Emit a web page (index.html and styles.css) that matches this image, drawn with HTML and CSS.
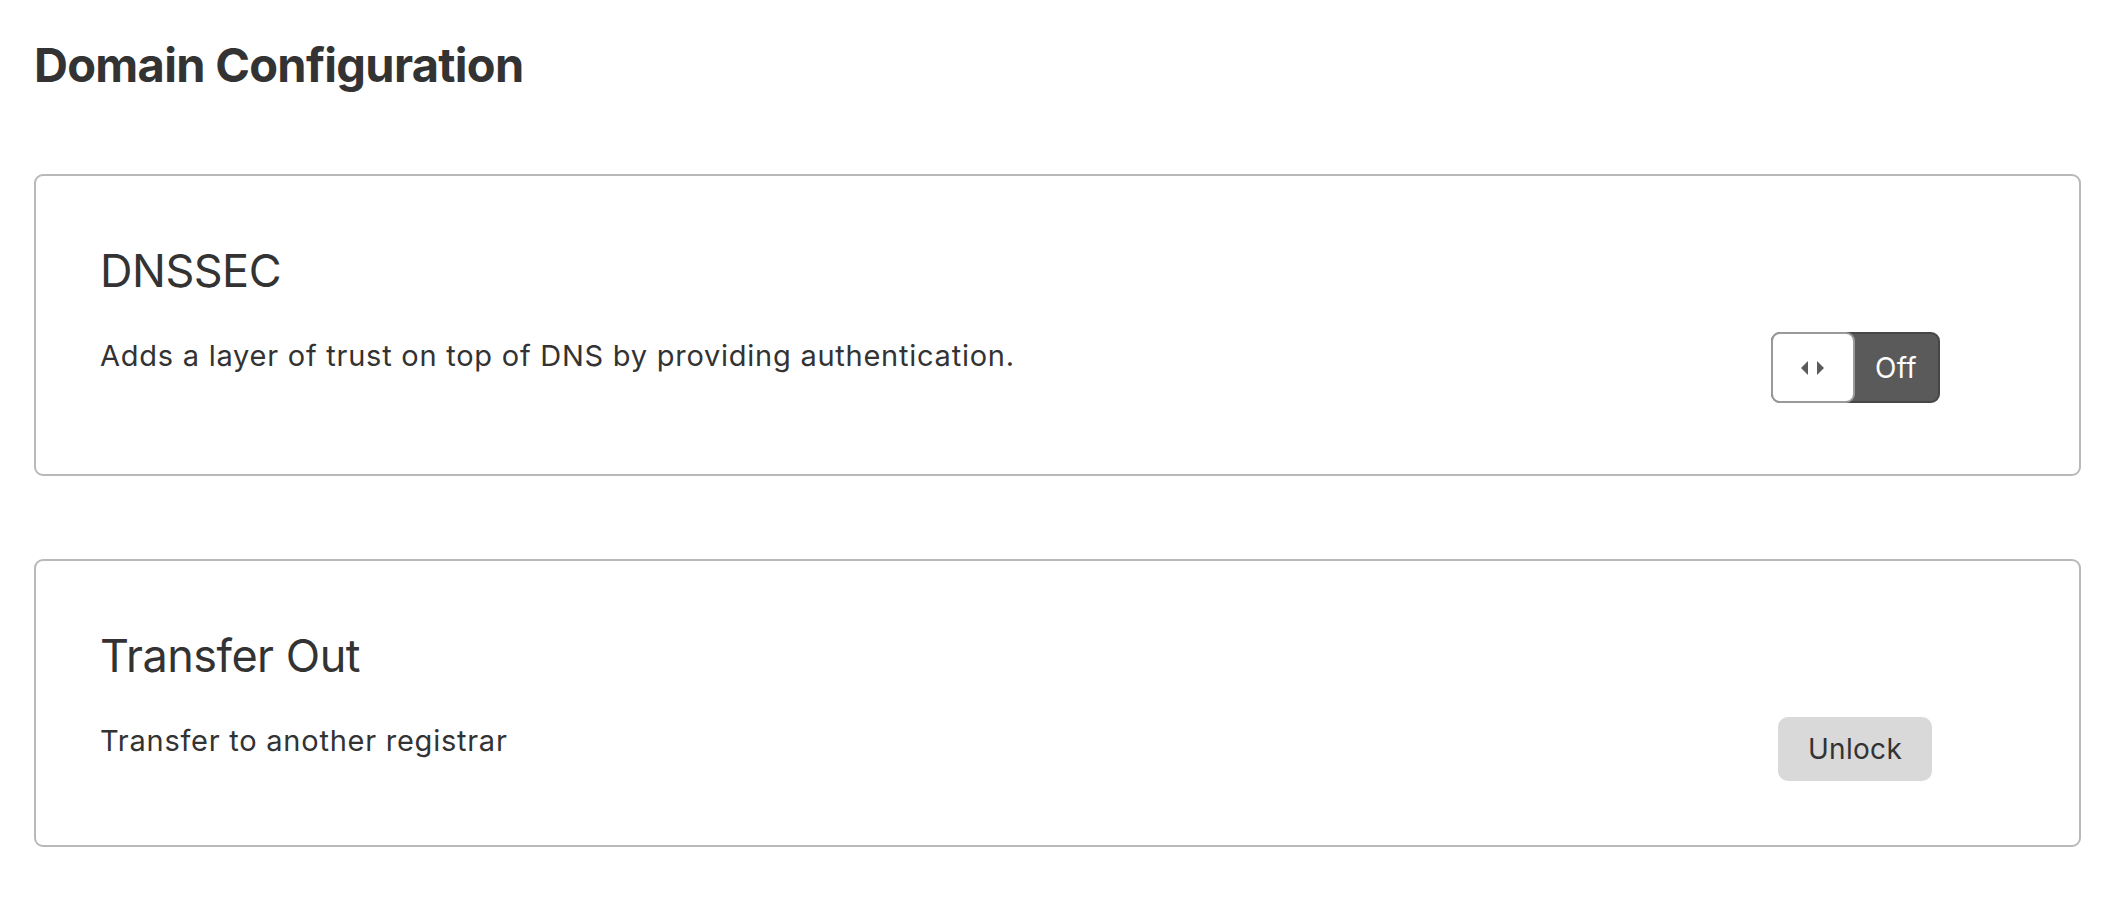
FILE: index.html
```html
<!DOCTYPE html>
<html lang="en">
<head>
<meta charset="utf-8">
<title>Domain Configuration</title>
<link rel="stylesheet" href="styles.css">
</head>
<body>
<h1 class="page-title">Domain Configuration</h1>

<section class="card card--tall">
  <h2 class="card-title">DNSSEC</h2>
  <div class="card-row">
    <p class="card-desc">Adds a layer of trust on top of DNS by providing authentication.</p>
    <div class="card-action">
      <button class="toggle" type="button" aria-pressed="false">
        <span class="toggle-knob">
          <svg class="toggle-icon" width="23" height="14" viewBox="0 0 23 14" aria-hidden="true">
            <polygon points="7,0 7,14 0,7"/>
            <polygon points="16,0 23,7 16,14"/>
          </svg>
        </span>
        <span class="toggle-label">Off</span>
      </button>
    </div>
  </div>
</section>

<section class="card">
  <h2 class="card-title">Transfer Out</h2>
  <div class="card-row">
    <p class="card-desc">Transfer to another registrar</p>
    <div class="card-action">
      <button class="btn" type="button">Unlock</button>
    </div>
  </div>
</section>
</body>
</html>
```
FILE: styles.css
```css
* { box-sizing: border-box; }

html, body { background: #ffffff; }

body {
  margin: 0;
  padding: 37px 41px 0 34px;
  font-family: "Inter", "Noto Sans", "Liberation Sans", sans-serif;
  color: #333333;
}

.page-title {
  margin: 0 0 81px;
  font-size: 47px;
  line-height: 56px;
  font-weight: 700;
  letter-spacing: -0.7px;
  color: #333333;
}

.card {
  border: 2px solid #b9b9b9;
  border-radius: 9px;
  padding: 68px 124px 64px 64px;
  margin-bottom: 83px;
}

.card:last-child { margin-bottom: 0; }

.card--tall { padding-bottom: 71px; }

.card-title {
  margin: 0 0 33px;
  font-size: 45px;
  line-height: 54px;
  font-weight: 400;
  letter-spacing: -0.5px;
  color: #333333;
}

.card-row {
  display: flex;
  align-items: flex-start;
}

.card-desc {
  flex: 1;
  margin: 0;
  font-size: 29px;
  line-height: 50px;
  letter-spacing: 0.75px;
  color: #333333;
}

.card-action {
  width: 200px;
  padding-top: 1px;
  display: flex;
  justify-content: center;
}

.toggle {
  display: flex;
  width: 169px;
  height: 71px;
  padding: 0;
  border: 2px solid #474747;
  border-radius: 9px;
  background: #5a5a5a;
  font-family: inherit;
  cursor: pointer;
}

.toggle-knob {
  width: 84px;
  margin: -2px 0 -2px -2px;
  display: flex;
  align-items: center;
  justify-content: center;
  background: #ffffff;
  border: 2px solid #9a9a9a;
  border-radius: 9px;
}

.toggle-icon { fill: #5a5a5a; }

.toggle-label {
  flex: 1;
  display: flex;
  align-items: center;
  justify-content: center;
  color: #ffffff;
  font-size: 28px;
  letter-spacing: 0.3px;
}

.btn {
  width: 154px;
  height: 64px;
  border: 0;
  border-radius: 10px;
  background: #d9d9d9;
  color: #333333;
  font-family: inherit;
  font-size: 28px;
  letter-spacing: 0.3px;
  cursor: pointer;
}
```
